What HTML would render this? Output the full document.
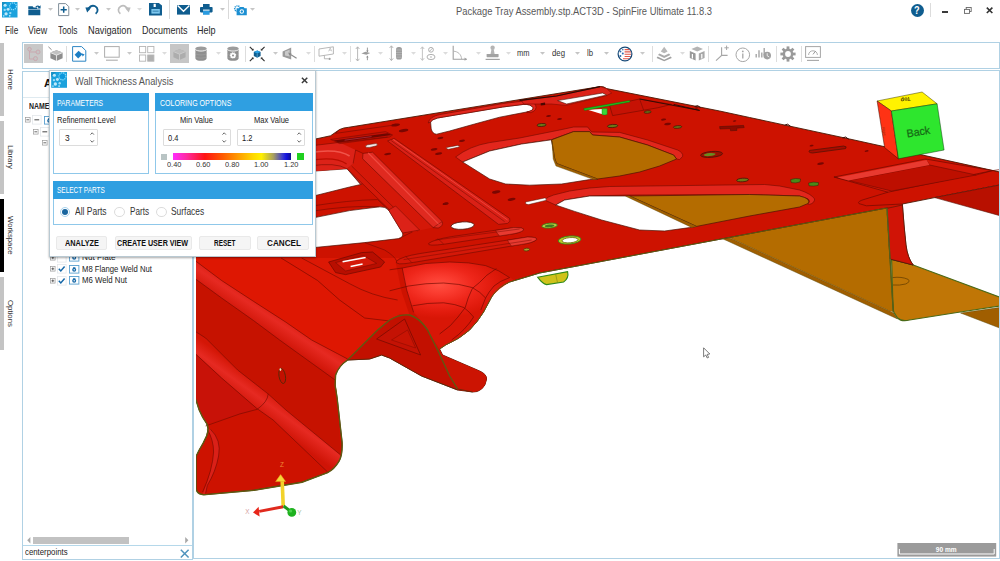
<!DOCTYPE html>
<html lang="en"><head><meta charset="utf-8"><title>Package Tray Assembly.stp.ACT3D - SpinFire Ultimate 11.8.3</title>
<style>
html,body{margin:0;padding:0;background:#fff;}
body{width:1000px;height:561px;overflow:hidden;position:relative;font-family:"Liberation Sans",sans-serif;}
.t{position:absolute;white-space:pre;transform-origin:0 50%;display:block;}
.a{position:absolute;}
svg{position:absolute;overflow:visible;}

#titlebar{position:absolute;left:0;top:0;width:1000px;height:22px;background:#fff;}
#menubar{position:absolute;left:0;top:22px;width:1000px;height:20px;background:#fff;}
#toolbar{position:absolute;left:22px;top:42px;width:978px;height:26.6px;border:1px solid #b0d1e4;box-sizing:border-box;background:#fff;}
#sidebar{position:absolute;left:0;top:42px;width:22px;height:519px;background:#fff;}
#tree{position:absolute;left:22px;top:71px;width:171px;height:489px;border:1px solid #b0d1e4;box-sizing:border-box;background:#fff;overflow:hidden;}
#viewport{position:absolute;left:193px;top:70px;width:807px;height:489.4px;border:1px solid #b0d1e4;border-width:1px 1px 1px 1px;box-sizing:border-box;background:#fff;overflow:hidden;}
#dialog{position:absolute;left:49px;top:70px;width:267px;height:187.4px;background:#fff;border:1px solid #b9c9d2;box-sizing:border-box;box-shadow:0 1px 2px rgba(0,0,0,.35);}
.grp{position:absolute;border:1px solid #8fc8ea;box-sizing:border-box;background:#fff;}
.grp .hd{position:absolute;left:-1px;top:-1px;right:-1px;height:18px;background:#2f9fe1;}
.spin{position:absolute;border:1px solid #dcdcdc;box-sizing:border-box;background:#fff;border-radius:1px;}
.btn{position:absolute;border:1px solid #e9e9e9;box-sizing:border-box;background:#f5f5f5;border-radius:2px;}
.rad{position:absolute;width:10px;height:10px;border-radius:50%;border:1px solid #dcdcdc;box-sizing:border-box;background:#fff;}
.sb{position:absolute;left:0;width:4px;background:#c4c4c4;}
.rot{position:absolute;white-space:pre;transform-origin:0 0;color:#333;}

</style></head><body>
<div id="viewport"><svg style="left:2.4px;top:0;overflow:hidden" width="802.6" height="488" viewBox="196.4 71 802.6 488"><defs>
<radialGradient id="dome" cx="440" cy="285" r="64" gradientUnits="userSpaceOnUse" gradientTransform="translate(440 285) scale(1 .52) translate(-440 -285)">
<stop offset="0" stop-color="#ff4e40"/><stop offset=".25" stop-color="#fa3c30"/><stop offset=".55" stop-color="#ee261a"/><stop offset=".85" stop-color="#e01a0c"/><stop offset="1" stop-color="#d81606"/></radialGradient>
<linearGradient id="sweep" x1="330" y1="300" x2="230" y2="420" gradientUnits="userSpaceOnUse">
<stop offset="0" stop-color="#d41408"/><stop offset=".35" stop-color="#e2201a"/><stop offset=".6" stop-color="#d01408"/><stop offset="1" stop-color="#c81000"/></linearGradient>
<linearGradient id="bead" x1="262" y1="296" x2="246" y2="320" gradientUnits="userSpaceOnUse"><stop offset="0" stop-color="#d81808"/><stop offset=".45" stop-color="#e62a22"/><stop offset="1" stop-color="#cf1406"/></linearGradient>
<linearGradient id="bead2" x1="262" y1="384" x2="246" y2="406" gradientUnits="userSpaceOnUse"><stop offset="0" stop-color="#d41606"/><stop offset=".45" stop-color="#e62a22"/><stop offset="1" stop-color="#cf1406"/></linearGradient>
</defs>
<path d="M552,139 L560,120 L700,110 L830,160 L887,208 L893,301 L894,312 L890,311 L735,240 L557,163.5 L555,158Z" fill="#b46c00"/>
<path d="M552,140 L555,158 L557,163.5 L598,179 L630,196 L700,226 L735,240 L890,311 L894,313 L898,319 L728,241 L697,227.5 L630,198.5 L598,181.5 L556,166 L553,159Z" fill="#a05e00" stroke="#5d4a08" stroke-width="0.5"/>
<path d="M961,313 L1000,307.5 L1000,328Z" fill="#a05e00" stroke="#5d4a08" stroke-width="0.5"/>
<path d="M892,259.4 L913.6,265 L1000,297 L1000,306 L957.5,312.5 L910,320 Q902,322 898,318 L893.5,311 Z" fill="#c07606" stroke="#4a6a18" stroke-width="1.2"/>
<path d="M893,277.6 Q902,276.4 908.6,279.4 Q911,282 906,284 Q900,285.6 893.4,285" fill="none" stroke="#5d3a00" stroke-width="0.7"/>
<path d="M887.4,208 L893,301 L894,312" fill="none" stroke="#4d5a10" stroke-width="1"/>
<path d="M190,150 L316,139 L331,135.75 L340,129.5 Q344,127.6 349,127.3 L600.5,86.6 Q604,86 607,88.6 L720,111 L750,117.5 L850,139 L1000,172 L1000,185 L935,197.6 L902.8,204 L904.6,227 L906.4,245 Q908,258 913.6,265 L892,259.4 L889,208.4 L887,208 L540,273 L510,282 Q498,287 492,297 L484,312 Q478,322 470,330 Q460,339 446,345 L440,349 L443,355 L480,371 Q487,374 487,379 Q486,386 482,389 Q478,392.5 473,392 L458,390 L422,376 L390,358 L382,355 L370,359 L348,360 Q339,366 336,375 L335.5,385 L337.5,398 L342.5,442.5 Q343,455 339.3,461.4 Q335,469 328,472.6 L302.4,482.2 L254.2,490.3 L206,494.6 Q198,495.4 196.4,489 L196.4,456.5 L199.6,450 Q204,443 207,436 Q210,429 207,423.4 Q203,418 199.6,410 L196.4,400 L194,396 L190,400 Z" fill="#cd1200" stroke="#4a1a06" stroke-width="0.9" stroke-linejoin="round"/>
<path d="M190,258 L281.5,258 L318,280.5 L340,300 L365,318 L390,321 L378,330 L362,346 L348,359 L312,340 L286,322 L254,301.4 L222,280.5 L196,261 L190,258 Z" fill="#de1702"/>
<path d="M281.5,258 L400,258 L396,262 L402,292 L410,315 L400,314 L390,321 L365,318 L340,300 L318,280.5 Z" fill="#dc1804"/>
<path d="M190,275 L196,279 L222,298 L254,320.6 L280,340 L335.5,380 L337.5,398 L341,455 L286.3,410 L268.6,394 L238,370 L206,338 L196,331.6 L190,327 Z" fill="#c61200"/>
<path d="M190,257 L196,261 L222,280.5 L254,301.4 L286,322 L312,340 L348,359 Q339,366 336,375 L335.5,380 L280,340 L254,320.6 L222,298 L196,279 L190,275 Z" fill="url(#bead)"/>
<path d="M190,327 L196,331.6 L206,338 L238,370 L268.6,394 L286.3,410 L341,455 Q341,459 339.3,461.4 Q335,469 328,472.6 L273.5,420 L257.4,408.6 L222,378 L196,354 L190,349 Z" fill="url(#bead2)"/>
<path d="M190,354 L196,354 L222,378 L257.4,408.6 L240,414 L207,424 L199.6,410 L196,400 L190,396 Z" fill="#c81208"/>
<path d="M210.9,429.3 Q222,440 219,456 Q216,472 207.7,485.4 L206,493.5 L203,494.5 Q213,470 214,452 Q214,440 207.7,429.3 Z" fill="#da2018"/>
<path d="M348,360 L362,346 L378,330 L390,320 Q400,314 410,315 Q420,318 428,330 L438,350 L450,376 L458,389 L422,376 L390,358 L382,355 L370,359 Z" fill="#c21000"/>
<path d="M405,319 L421,355 L377,339 Z" fill="#c41204" stroke="#6e0a00" stroke-width="0.7"/>
<path d="M408,330 L416,348 L392,340 Z" fill="#c81404" stroke="#6e0a00" stroke-width="0.4"/>
<path d="M440,349 L443,355 L480,371 Q487,374 487,379 Q486,386 482,389 Q478,392.5 473,392 L458,390 L450,376 L438,350 Z" fill="#cc1402"/>
<path d="M402.6,268 Q426,262 450,262 Q470,262 486,265.6 Q500,270 514,280 Q500,287 492,297 L484,312 Q478,322 470,330 Q460,339 446,345 L440,349 L428,330 Q420,318 414,312.4 Q406,290 402.6,268 Z" fill="url(#dome)"/>
<path d="M402.6,268 Q406,290 414,312.4" fill="none" stroke="#6e0a00" stroke-width="0.65"/>
<path d="M390,269.8 L402.6,268 Q426,262 450,262 Q470,262 486,265.6 Q500,270 510,277.6" fill="none" stroke="#6e0a00" stroke-width="0.65"/>
<path d="M390,290.8 L409,286 Q426,283 444,283 Q460,283.6 472.8,287.6 Q481,292 486,298" fill="none" stroke="#6e0a00" stroke-width="0.65"/>
<path d="M412.8,305.8 Q428,302.6 444,302.8 Q456,304 464.4,307.6 Q470,312 474,317" fill="none" stroke="#6e0a00" stroke-width="0.65"/>
<path d="M496.8,268.6 Q486,275 480,282.4 L472.8,288.4 Q468,298 465.6,307.6 L458.4,317" fill="none" stroke="#6e0a00" stroke-width="0.65"/>
<path d="M510,277.6 Q500,281 494.4,286 Q489,292 486,298 L481.2,310" fill="none" stroke="#6e0a00" stroke-width="0.65"/>
<path d="M458.4,317 Q452,326 440,334" fill="none" stroke="#6e0a00" stroke-width="0.65"/>
<path d="M474,317 Q466,330 452,340" fill="none" stroke="#6e0a00" stroke-width="0.65"/>
<path d="M196,261 L222,280.5 L254,301.4 L286,322 L312,340 L348,359" fill="none" stroke="#6e0a00" stroke-width="0.6"/>
<path d="M196,279 L222,298 L254,320.6 L280,340 L335.5,380" fill="none" stroke="#6e0a00" stroke-width="0.6"/>
<path d="M281.5,258 L318,280.5 L340,300 L365,318 L390,321" fill="none" stroke="#6e0a00" stroke-width="0.6"/>
<path d="M302,258 L350,283.7 Q372,296 398,300" fill="none" stroke="#6e0a00" stroke-width="0.6"/>
<path d="M196,331.6 L206,338 L238,370 L268.6,394 L286.3,410 L341,455" fill="none" stroke="#6e0a00" stroke-width="0.6"/>
<path d="M196,354 L222,378 L257.4,408.6 L273.5,420 L328,472" fill="none" stroke="#6e0a00" stroke-width="0.6"/>
<path d="M268.6,394 Q268,402 257.4,409.4 L240,414 L206,426" fill="none" stroke="#6e0a00" stroke-width="0.6"/>
<path d="M210.9,429.3 Q222,440 219,456 Q216,472 207.7,485.4 L206,493.5" fill="none" stroke="#6e0a00" stroke-width="0.6"/>
<path d="M207.7,429.3 Q214,440 214,452 Q213,470 203,492" fill="none" stroke="#6e0a00" stroke-width="0.6"/>
<ellipse cx="282.6" cy="376" rx="3.2" ry="7.6" transform="rotate(-10 282.6 376)" fill="#c21000" stroke="#4a2a06" stroke-width=".8"/><ellipse cx="280.8" cy="369.6" rx=".9" ry="1.3" fill="#f4e8c0"/>
<path d="M347.5,168.8 L353.5,163.5 L370,180 L361,184.5 Z" fill="#dc2018" stroke="#6e0a00" stroke-width="0.6"/>
<path d="M310,171.4 L347.5,168.8 L361,184.5 L350,187 L310,197 Z" fill="#fff" stroke="#4a1206" stroke-width="0.7"/>
<path d="M310,218.6 L350,210.6 L380,206.8 Q386,206.6 389,210 L403,233 Q404,237.6 399,238.6 L365,242.6 L310,248 Z" fill="#fff" stroke="#4a1206" stroke-width="0.7"/>
<path d="M431,122 Q432,119.6 438,118 L503,107 L524,104.4 Q531,104 533.4,107.6 Q534.4,110.6 527,112 L500,117.2 L475,124 L450,131 L437,134.2 Q433,134 431.6,129 Z" fill="#fff" stroke="#4a1206" stroke-width="0.7"/>
<path d="M428.6,123 Q430,116.6 440,114.6 L503,103.6 L524,101 Q533,100.6 536,105 Q538,110.6 531,112.6 L527,112 Q534.4,110.6 533.4,107.6 Q531,104 524,104.4 L503,107 L438,118 Q432,119.6 431,122 Z" fill="#e2261c" stroke="#6e0a00" stroke-width="0.6"/>
<path d="M456,157 Q470,146 490,142.6 L520,138 L560,130 L574,127 L588,127 L592,132 L620,132.4 L648,140 L678,150 Q684,153 683,156.4 L680,159.6 L677,159 L674,155 L648,145 L620,137 L593,135 L590,131.6 L574,131.6 L552,139.6 L522,144 L490,151 L463,162 Z" fill="#e2261c" stroke="#6e0a00" stroke-width="0.6"/>
<path d="M463,162 L490,151 L522,144 L552,139.8 L555,158 L557,163.5 L598,179 L590,179.6 L562,184 L530,185.2 L506,184 L490,179 Z" fill="#fff" stroke="#4a1206" stroke-width="0.7"/>
<path d="M552,139.8 L574,131.6 L590,131.6 L593,135 L620,137 L648,145 L674,155 L677,159 L660,166 L640,172 L620,176 L598,179 L557,163.5 L555,158 Z" fill="#b46c00" stroke="#4a1206" stroke-width="0.7"/>
<path d="M552.4,141 L555,158 L557,163.5 L598,179 L594,179.6 L556.4,166 L553.6,159 Z" fill="#a05e00" stroke="#5d4a08" stroke-width="0.4"/>
<path d="M545,200 Q548,196.6 554,195 L570,191 L590,188 L610,186.5 L765,184.5 L780,186 L800,190 Q812,194 815,199 Q815,203 810,204.4 L808,204 Q811.6,201 808,198.6 L800,196 L750,194.5 L627,195 L590,196 L565,200 L556,205 Z" fill="#e2261c" stroke="#6e0a00" stroke-width="0.6"/>
<path d="M556,205 L565,200 L590,196 L630,196 L697,226.4 L690,227.6 L665,231 L640,230 L602,220 L575,211.4 Z" fill="#fff" stroke="#4a1206" stroke-width="0.7"/>
<path d="M630,196 L750,194.5 L800,196 Q811.6,198.6 808.6,203.4 L800,207 L750,216 L697,226.4 Z" fill="#b46c00" stroke="#4a1206" stroke-width="0.7"/>
<path d="M630,196 L697,226.4 L692,227.4 L626,196.2 Z" fill="#a05e00" stroke="#5d4a08" stroke-width="0.4"/>
<path d="M522,100.6 L557,96 L600.5,86.6 L607,88.6 L612,93 L607,95.6 L566,105.4 L552,104 L524,104 Z" fill="#dc2218" stroke="#6e0a00" stroke-width="0.5"/>
<path d="M558,100.6 L603,93 L607,95 L567,104 Z" fill="#fff" stroke="#4a1206" stroke-width="0.6"/>
<path d="M520,100.4 L557,96 L600.5,86.6" fill="none" stroke="#2a0a04" stroke-width="1.2"/>
<path d="M610,105.4 L640,99 L672,104.4 L658,107.8 L613,115.6 Z" fill="#c61204" stroke="#6e0a00" stroke-width="0.6"/>
<path d="M640,99 L644,110" fill="none" stroke="#6e0a00" stroke-width="0.5"/>
<path d="M588,109.8 L603,109 L603.6,114.6 Z" fill="#fff"/>
<path d="M584,108.6 L630,100.4 L630.4,102 L585,110.4 Z" fill="#1fc21f" stroke="#0a6a0a" stroke-width="0.4"/>
<path d="M602.4,108.6 H607.6 V114.4 Q605,115.6 602.4,114.4 Z" fill="#3ad83a" stroke="#0a7a0a" stroke-width="0.4"/>
<path d="M935,197.6 L1000,185 L1000,215.6 Z" fill="#b81000" stroke="#5a1408" stroke-width="0.6"/>
<path d="M834.4,177 L926,159 L993,170.6 L888.4,192.2 Z" fill="#d41808" stroke="#6e0a00" stroke-width="0.7"/>
<path d="M849,180.5 L930,165 L976.6,175 L892,191 Z" fill="#bd0f00" stroke="#6e0a00" stroke-width="0.6"/>
<path d="M834.4,177 L849,180.5 M926,159 L930,165 M993,170.6 L976.6,175" fill="none" stroke="#6e0a00" stroke-width="0.6"/>
<path d="M838,177.4 L927,160 L930,165 L849,180.5 Z" fill="#e83a30"/>
<path d="M888.4,192.2 L866,199 Q857,201.4 859.4,203.6 L866.8,205.8 L902.8,204" fill="none" stroke="#6e0a00" stroke-width="0.7"/>
<path d="M993,170.6 L1000,169.6" fill="none" stroke="#6e0a00" stroke-width="0.7"/>
<path d="M887.4,208.4 L902.8,205 L904.6,227 L906.4,245 Q908,258 913.6,265 L890.4,259 Z" fill="#d01406" stroke="#4a1a06" stroke-width="0.6"/>
<path d="M887.4,208 L893,301 L894,312" fill="none" stroke="#55601a" stroke-width="1.3"/>
<path d="M887,208 L540,273 L510,282 Q498,287 492,297 L484,312 Q478,322 470,330 Q460,339 446,345 L440,349" fill="none" stroke="#5e5a12" stroke-width="1"/>
<path d="M458,389 L450,376 L438,350 L428,330 Q420,318 410,315 Q400,314 390,320 L378,330 L362,346 L348,360 Q339,366 336,375 L335.5,385 L337.5,398 L342.5,442.5 Q343,455 339.3,461.4 Q335,469 328,472.6 L302.4,482.2 L254.2,490.3 L206,494.6 Q198,495.4 196.4,489 L196.4,456.5 L199.6,450 Q204,443 207,436 Q210,429 207,423.4 Q203,418 199.6,410 L196.4,400 L194,396" fill="none" stroke="#5e5a12" stroke-width="1.4"/>
<path d="M458,389 L473,392 M348,360 L370,359 L382,355 L390,358 L422,376 L458,390" fill="none" stroke="#5a2a08" stroke-width="0.8"/>
<path d="M538,277.2 L568,271.6 Q569.6,278 564,282 L547,284.6 Q543,284 538,277.2 Z" fill="#cfc21a" stroke="#2f8a1a" stroke-width="1.1"/>
<path d="M556,274 L558,283" fill="none" stroke="#7a8a10" stroke-width="0.6"/>
<ellipse cx="463" cy="225.6" rx="11.6" ry="3.7" transform="rotate(-4 463 225.6)" fill="#fff" stroke="#4a1206" stroke-width=".8"/>
<ellipse cx="570" cy="240" rx="11.4" ry="4" transform="rotate(-5 570 240)" fill="#b8c828" stroke="#2f8a1a" stroke-width=".8"/>
<ellipse cx="570.4" cy="240.2" rx="8" ry="2.6" transform="rotate(-5 570.4 240.2)" fill="#fff" stroke="#6a6a10" stroke-width=".8"/>
<ellipse cx="550" cy="225.6" rx="7.8" ry="2.4" transform="rotate(-5 550 225.6)" fill="#b8c840" stroke="#2f8a1a" stroke-width=".8"/>
<ellipse cx="550" cy="225.8" rx="4.8" ry="1.3" transform="rotate(-5 550 225.8)" fill="#3f7a20"/>
<ellipse cx="527" cy="249.6" rx="3" ry="1.4" transform="rotate(-5 527 249.6)" fill="#a8a030" stroke="#5a3a08" stroke-width=".8"/>
<ellipse cx="446" cy="203.6" rx="3" ry="1.2" transform="rotate(-9 446 203.6)" fill="#8a0800"/>
<path d="M367,147.4 Q364.6,146 368,144.8 L376,143.6 Q379,144.2 377,145.8 L370,147.4 Z" fill="#f6eaea" stroke="#4a1206" stroke-width="0.5"/>
<path d="M447,147.6 L458,145.4 Q460.6,145.4 459.4,147 L449,149.2 Q446,149 447,147.6 Z" fill="#fff" stroke="#4a1206" stroke-width="0.5"/>
<path d="M526,202 L545,198 Q548,198.4 546,200.4 L529,204.6 Q525,204.4 526,202 Z" fill="#fff" stroke="#4a1206" stroke-width="0.5"/>
<ellipse cx="396" cy="125" rx="4.4" ry="1.4" transform="rotate(-9 396 125)" fill="#7a0600"/>
<ellipse cx="404" cy="130.6" rx="4.8" ry="1.5" transform="rotate(-9 404 130.6)" fill="#7a0600"/>
<ellipse cx="434.5" cy="149.4" rx="3.4" ry="1.2" transform="rotate(-9 434.5 149.4)" fill="#7a0600"/>
<ellipse cx="439" cy="153.6" rx="3.6" ry="1.2" transform="rotate(-9 439 153.6)" fill="#7a0600"/>
<ellipse cx="440.8" cy="138" rx="3" ry="1.1" transform="rotate(-9 440.8 138)" fill="#7a0600"/>
<ellipse cx="462.4" cy="140.8" rx="3" ry="1.1" transform="rotate(-9 462.4 140.8)" fill="#7a0600"/>
<ellipse cx="388" cy="154" rx="3.4" ry="1.1" transform="rotate(-9 388 154)" fill="#7a0600"/>
<ellipse cx="496.6" cy="192" rx="4.2" ry="1.5" transform="rotate(-9 496.6 192)" fill="#7a0600"/>
<ellipse cx="512" cy="199.3" rx="4" ry="1.4" transform="rotate(-9 512 199.3)" fill="#7a0600"/>
<ellipse cx="549" cy="116" rx="2.4" ry="1" transform="rotate(-9 549 116)" fill="#7a0600"/>
<ellipse cx="560" cy="119" rx="2.4" ry="1" transform="rotate(-9 560 119)" fill="#7a0600"/>
<ellipse cx="664" cy="119.6" rx="2.6" ry="1" transform="rotate(-9 664 119.6)" fill="#7a0600"/>
<ellipse cx="668" cy="124" rx="3.4" ry="1.2" transform="rotate(-9 668 124)" fill="#7a0600"/>
<ellipse cx="697" cy="108" rx="1.6" ry="0.7" transform="rotate(-9 697 108)" fill="#7a0600"/>
<ellipse cx="735" cy="121" rx="1.8" ry="0.7" transform="rotate(-9 735 121)" fill="#7a0600"/>
<ellipse cx="812" cy="145.6" rx="2" ry="0.8" transform="rotate(-9 812 145.6)" fill="#7a0600"/>
<ellipse cx="867" cy="151" rx="2" ry="0.8" transform="rotate(-9 867 151)" fill="#7a0600"/>
<ellipse cx="821" cy="163.6" rx="3.4" ry="1.2" transform="rotate(-9 821 163.6)" fill="#7a0600"/>
<ellipse cx="446" cy="203.8" rx="3" ry="1.2" transform="rotate(-9 446 203.8)" fill="#7a0600"/>
<ellipse cx="542" cy="125" rx="4.6" ry="1.5" transform="rotate(-4 542 125)" fill="#6a7a18" stroke="#4a1206" stroke-width=".8"/>
<ellipse cx="613" cy="126" rx="5.2" ry="1.6" transform="rotate(-4 613 126)" fill="#6a7a18" stroke="#4a1206" stroke-width=".8"/>
<ellipse cx="648" cy="112" rx="3.6" ry="1.2" transform="rotate(-4 648 112)" fill="#6a7a18" stroke="#4a1206" stroke-width=".8"/>
<ellipse cx="678" cy="127" rx="4.2" ry="1.3" transform="rotate(-4 678 127)" fill="#6a7a18" stroke="#4a1206" stroke-width=".8"/>
<ellipse cx="743" cy="180" rx="6" ry="1.8" transform="rotate(-4 743 180)" fill="#6a7a18" stroke="#4a1206" stroke-width=".8"/>
<ellipse cx="712" cy="154.4" rx="11" ry="2.9" transform="rotate(-5 712 154.4)" fill="#9a1000" stroke="#4a1206" stroke-width=".8"/>
<ellipse cx="710" cy="154.6" rx="6" ry="1.5" transform="rotate(-5 710 154.6)" fill="#6a8a20"/>
<path d="M720,126.6 L744,125.4 L744.6,127.6 L737,128.2 L737.4,130.4 L731,130.8 L730.6,128.6 L720.4,129 Z" fill="#8e0a00" stroke="#4a1206" stroke-width="0.5"/>
<path d="M810,150.4 L844,146 Q848,146.4 846,148.6 L813,153 Q808,152.6 810,150.4 Z" fill="#a80c00" stroke="#4a1206" stroke-width="0.7"/>
<path d="M541,103.2 L545.4,102.6 L545.6,105 L541.2,105.6 Z" fill="#4a0600"/>
<path d="M791,179.6 Q796,177.6 801,179 L800.4,182 Q796,183.6 791.6,182.6 Z M809,183 Q814,181.4 819,182.6 L818.6,185.4 Q814,186.6 809.4,185.8 Z" fill="#4a8a18" stroke="#3a1a06" stroke-width="0.5"/>
<path d="M695,106.6 L698,105.6 L701,107.6 M785,125.2 L788,124.2 L791,126.4 M843,138 L846,137 L849,139.2" fill="none" stroke="#3a0a04" stroke-width="1"/>
<path d="M429,243.4 Q434,239.6 452,236.6 L514,227.6 Q525,227.4 524,230 Q521,233 510,234.4 L446,244 Q427,246.6 429,243.4 Z" fill="#d41808" stroke="#6e0a00" stroke-width="0.6"/>
<path d="M496,230.4 L514,227.6 Q525,227.4 524,230 Q521,233 510,234.4 L500,236 Q497,233 496,230.4 Z" fill="#e83a30" stroke="#6e0a00" stroke-width="0.5"/>
<path d="M397,261 Q402,256.6 420,253.6 L528,237 Q538,237 537,239.6 Q533,243 522,244.4 L414,262.4 Q394,266 397,261 Z" fill="#d41808" stroke="#6e0a00" stroke-width="0.6"/>
<path d="M508,240.2 L528,237 Q538,237 537,239.6 Q533,243 522,244.4 L512,246 Q509,243 508,240.2 Z" fill="#e83a30" stroke="#6e0a00" stroke-width="0.5"/>
<path d="M436,240 L520,229 M404,259.6 L532,240" fill="none" stroke="#6e0a00" stroke-width="0.45"/>
<path d="M438,238.6 Q441,241 444,244 M406,256.4 Q409,259 412,262.4" fill="none" stroke="#6e0a00" stroke-width="0.5"/>
<path d="M356,150 L363.4,153.4 L433.6,227.4 L412.7,232 L347.5,168.8 L353.5,163.5 Z" fill="#d41808"/>
<path d="M363.4,153.4 L373,152.2 L442.6,221.6 Q444,226 438.6,228 L433.6,227.6 L363,158.8 Z" fill="#e02a20" stroke="#6e0a00" stroke-width="0.6"/>
<path d="M368.6,153 L439.6,224.6" fill="none" stroke="#f04a40" stroke-width="1.1"/>
<path d="M433.6,227.6 Q438,224.6 442.6,221.6" fill="none" stroke="#6e0a00" stroke-width="0.5"/>
<path d="M388,141 L394.6,138.4 L510,218.4 Q511.6,221.6 508,223.4 L499,224.4 Z" fill="#da2016" stroke="#6e0a00" stroke-width="0.6"/>
<path d="M391.6,140.6 L505,221.6" fill="none" stroke="#6e0a00" stroke-width="0.5"/>
<path d="M393.6,139.4 L508,220" fill="none" stroke="#ee463c" stroke-width="0.9"/>
<path d="M310,146 L340,142.4 L356,150 L353.5,163.5 L347.5,168.8 L310,171.4 Z" fill="#dc2218"/>
<path d="M310,152.6 Q338,148 350,156" fill="none" stroke="#f0544a" stroke-width="1.6"/>
<path d="M310,160.4 Q336,156 347,164" fill="none" stroke="#b80e00" stroke-width="1.2"/>
<path d="M331,139.4 L386,131.6 L393,135 L390,137 L340,143.6 Z" fill="#c01004" stroke="#6e0a00" stroke-width="0.5"/>
<path d="M334,140.6 L388,133.2 L392,135 L339,142.6 Z" fill="#6e0600"/>
<path d="M345,140.2 L372,136.6" fill="none" stroke="#a8283a" stroke-width="0.9"/>
<path d="M310,146 L340,142.4 L362,140 L388,137" fill="none" stroke="#6e0a00" stroke-width="0.55"/>
<path d="M340,129.5 L336,133.4 L392,125.4" fill="none" stroke="#6e0a00" stroke-width="0.55"/>
<path d="M310,166 Q336,162 347.5,168.8" fill="none" stroke="#6e0a00" stroke-width="0.55"/>
<path d="M353.5,163.5 L356,150 L363.4,153.4" fill="none" stroke="#6e0a00" stroke-width="0.55"/>
<path d="M347.5,168.8 L412.7,232" fill="none" stroke="#6e0a00" stroke-width="0.55"/>
<path d="M352,166 L418,231" fill="none" stroke="#6e0a00" stroke-width="0.55"/>
<path d="M310,206.4 Q350,200 378,199.6 L389,210" fill="none" stroke="#6e0a00" stroke-width="0.55"/>
<path d="M310,211.6 Q350,205 380,206.8" fill="none" stroke="#6e0a00" stroke-width="0.55"/>
<path d="M399,238.6 L412.7,232" fill="none" stroke="#6e0a00" stroke-width="0.55"/>
<path d="M403,233 L412,230" fill="none" stroke="#6e0a00" stroke-width="0.55"/>
<path d="M365,242.6 L385,250 Q395,256 397,261" fill="none" stroke="#6e0a00" stroke-width="0.55"/>
<path d="M316,139 L316,146" fill="none" stroke="#6e0a00" stroke-width="0.55"/>
<path d="M389,210 L396,206 L420,230 L403,233 Z" fill="#dc2218" stroke="#6e0a00" stroke-width="0.5"/>
<path d="M329,262 L362,252.6 L373,252 L385,262 L381,267 L346,274.6 L336,272.6 Z" fill="#b80e00" stroke="#6e0a00" stroke-width="0.7"/>
<path d="M336,262.6 L364,255.6 L377,263.4 L346,271 Z" fill="#d41808" stroke="#6e0a00" stroke-width="0.5"/>
<path d="M343,261.8 L366,257.4" fill="none" stroke="#fff" stroke-width="1.5"/>
<path d="M351,266.4 L363,264" fill="none" stroke="#fff" stroke-width="1.5"/>
<path d="M640,99 L700,110.4 L674,104.4" fill="none" stroke="#2a0a04" stroke-width="0.9"/>
<path d="M877.5,101 L922.5,92 L937.5,103.8 L891.8,111 Z" fill="#fff200" stroke="#3a3a00" stroke-width="0.5"/>
<path d="M877.5,101 L891.8,111 L898.8,158.8 L885,147.5 Z" fill="#ff3214" stroke="#3a0a00" stroke-width="0.5"/>
<path d="M891.8,111 L937.5,103.8 L944.5,150 L898.8,158.8 Z" fill="#2ee62e" stroke="#0a3a0a" stroke-width="0.5"/>
<text x="918.6" y="135.6" font-family="Liberation Sans, sans-serif" font-size="11" fill="#156a15" stroke="#156a15" stroke-width=".25" text-anchor="middle" transform="rotate(-9 918.6 131.6)" textLength="23.6" lengthAdjust="spacingAndGlyphs">Back</text>
<text x="906" y="101.6" font-family="Liberation Sans, sans-serif" font-size="5.6" font-weight="bold" fill="#4a4000" text-anchor="middle" transform="rotate(170 906 99.6)">Top</text>
<text x="885.4" y="133" font-family="Liberation Sans, sans-serif" font-size="3.6" fill="#8a2a10" text-anchor="middle" transform="rotate(82 885 131)">Right</text>
<path d="M282.6,481 L283.6,506" fill="none" stroke="#f2d22a" stroke-width="3.6"/>
<path d="M276,481.6 L281,474.6 L286,481.6 Z" fill="#f6d838" stroke="#e8a020" stroke-width="0.5"/>
<path d="M259.6,511.4 L283.6,506.8" fill="none" stroke="#e02a1e" stroke-width="3"/>
<path d="M253.4,512.6 L259,506.8 L260,516.4 Z" fill="#e8261a"/>
<path d="M284,506 L291,511.4" fill="none" stroke="#1e9a1e" stroke-width="3"/>
<circle cx="292.2" cy="512.4" r="4.4" fill="#1fb21f"/><circle cx="291" cy="511" r="1.6" fill="#4ad24a"/>
<text x="280.4" y="467.4" font-family="Liberation Sans, sans-serif" font-size="6.4" fill="#f08a3a">Z</text>
<text x="245.6" y="513.6" font-family="Liberation Sans, sans-serif" font-size="6.4" fill="#d4a0a0">X</text>
<text x="297.6" y="515" font-family="Liberation Sans, sans-serif" font-size="6.4" fill="#a0c0a0">Y</text>
<rect x="897.8" y="543" width="98.8" height="13.6" fill="#9b9b9b"/>
<path d="M899.8,549 V554 H994.6 V549" fill="none" stroke="#fff" stroke-width="1"/>
<text x="946.6" y="551.8" font-family="Liberation Sans, sans-serif" font-size="6.6" font-weight="bold" fill="#fff" text-anchor="middle">90 mm</text>
<path d="M704,347.8 V356.8 L706.2,355 L707.6,358 L709,357.4 L707.6,354.4 L710.2,354 Z" fill="#fff" stroke="#444" stroke-width="0.7"/></svg></div>
<div id="titlebar"><svg class="a" style="left:2px;top:2px" width="15.5" height="15.5" viewBox="0 0 16 16"><rect width="16" height="16" fill="#1ca2dc"/><path d="M0 0H5L0 5Z" fill="#1590c4"/>
<circle cx="11.4" cy="4.4" r="3.5" fill="#0c98dc" stroke="#86dcfb" stroke-width="1.3" stroke-dasharray="1.3 0.8"/>
<circle cx="3.2" cy="3.3" r="1.6" fill="#bfe9fb"/><circle cx="6.3" cy="7.6" r="1.5" fill="#bfe9fb"/>
<circle cx="2.8" cy="8.2" r="1.2" fill="#9bdcf8"/><circle cx="4.2" cy="12.2" r="1.7" fill="#bfe9fb"/>
<circle cx="8.6" cy="11.4" r="1.2" fill="#9bdcf8"/><circle cx="1.8" cy="14.2" r="0.9" fill="#9bdcf8"/><circle cx="8" cy="14.3" r="0.9" fill="#bfe9fb"/></svg><svg class="a" style="left:27.5px;top:4px" width="13" height="11.5" viewBox="0 0 13 11.5"><path d="M0.3 2.2H4.6L5.6 3.6H9.2V5H0.3Z M0.3 5.6H12.3V11.2H0.3Z" fill="#0f5d8f"/><path d="M7.5 2.6C9 1.2 10.6 1.2 11.4 2.2L12.6 1.2V4.6H9.2L10.4 3.4C9.6 2.6 8.6 2.8 8 3.4Z" fill="#0f5d8f"/></svg><svg class="a" style="left:47.5px;top:8.4px" width="5" height="3" viewBox="0 0 5 3"><path d="M0 0H5L2.5 2.8Z" fill="#c6c6c6"/></svg><svg class="a" style="left:57.5px;top:3px" width="11.5" height="13.2" viewBox="0 0 11.5 13.2"><path d="M0.6 0.6H7.6L10.8 3.6V12.6H0.6Z" fill="#fff" stroke="#7f8f9a" stroke-width="1"/><path d="M5.7 3.6V9.8M2.6 6.7H8.8" stroke="#0f5d8f" stroke-width="1.5"/></svg><svg class="a" style="left:74.5px;top:8.4px" width="5" height="3" viewBox="0 0 5 3"><path d="M0 0H5L2.5 2.8Z" fill="#c6c6c6"/></svg><svg class="a" style="left:85px;top:5px" width="14" height="9.5" viewBox="0 0 14 9.5"><path d="M3.4 5.2A4.6 4.4 0 1 1 10.6 8.8" fill="none" stroke="#0f5d8f" stroke-width="1.9"/><path d="M0.4 2.6L6.4 2.2L2.2 7.6Z" fill="#0f5d8f"/></svg><svg class="a" style="left:105.5px;top:8.4px" width="5" height="3" viewBox="0 0 5 3"><path d="M0 0H5L2.5 2.8Z" fill="#c6c6c6"/></svg><svg class="a" style="left:116.5px;top:5px" width="14" height="9.5" viewBox="0 0 14 9.5"><path d="M10.6 5.2A4.6 4.4 0 1 0 3.4 8.8" fill="none" stroke="#bdbdbd" stroke-width="1.7"/><path d="M13.6 2.6L7.6 2.2L11.8 7.6Z" fill="#bdbdbd"/></svg><svg class="a" style="left:136.5px;top:8.4px" width="5" height="3" viewBox="0 0 5 3"><path d="M0 0H5L2.5 2.8Z" fill="#dcdcdc"/></svg><svg class="a" style="left:149px;top:3.4px" width="13" height="12.4" viewBox="0 0 13 12.4"><path d="M0 0H9.8L13 2.6V12.4H0Z" fill="#0f5d8f"/><rect x="4.6" y="0.8" width="2.2" height="3.2" fill="#fff"/><rect x="2.4" y="6" width="8.4" height="4.6" fill="#7ec8ef"/><rect x="3.6" y="7.6" width="6" height="1.2" fill="#0f5d8f" opacity=".55"/></svg><div class="a" style="left:168.9px;top:0px;width:1px;height:19px;background:#d9d9d9"></div><svg class="a" style="left:177px;top:5px" width="13" height="9.6" viewBox="0 0 13 9.6"><rect width="13" height="9.6" fill="#0f5d8f"/><path d="M0.6 0.6L6.5 6.2L12.4 0.6" fill="none" stroke="#fff" stroke-width="1.4"/></svg><svg class="a" style="left:200px;top:4.2px" width="12.6" height="11" viewBox="0 0 12.6 11"><rect x="3" y="0" width="6.6" height="3" fill="#0f5d8f"/><rect x="0" y="3" width="12.6" height="5.4" rx="0.8" fill="#0f5d8f"/><rect x="3" y="6.4" width="6.6" height="4.4" fill="#2a9be0"/><rect x="3" y="5.6" width="6.6" height="1" fill="#fff"/></svg><svg class="a" style="left:219.5px;top:8.4px" width="5" height="3" viewBox="0 0 5 3"><path d="M0 0H5L2.5 2.8Z" fill="#c6c6c6"/></svg><div class="a" style="left:228.0px;top:0px;width:1px;height:19px;background:#d9d9d9"></div><svg class="a" style="left:234px;top:4.6px" width="13" height="10.4" viewBox="0 0 13 10.4"><circle cx="3.4" cy="3.6" r="2.7" fill="none" stroke="#1b8fd2" stroke-width="1.5" stroke-dasharray="1.1 0.8"/><path d="M2.6 3.2H5L6 2H9.6L10.6 3.2H12.8V10.2H2.6Z" fill="#1b8fd2"/><circle cx="7.8" cy="6.5" r="2.2" fill="#fff"/><circle cx="7.8" cy="6.5" r="1.2" fill="#1b8fd2"/></svg><svg class="a" style="left:250.0px;top:8.4px" width="5" height="3" viewBox="0 0 5 3"><path d="M0 0H5L2.5 2.8Z" fill="#c6c6c6"/></svg><span class="t" style="left:456.00px;top:5.71px;font-size:10.5px;line-height:10.5px;color:#585858;transform:scaleX(0.8929);">Package Tray Assembly.stp.ACT3D - SpinFire Ultimate 11.8.3</span><div class="a" style="left:910.6px;top:3.7px;width:13.4px;height:13.4px;border-radius:50%;background:#0f5d8f"></div><span class="t" style="left:914.40px;top:5.31px;font-size:10.5px;line-height:10.5px;color:#fff;font-weight:bold;transform:scaleX(0.8730);">?</span><div class="a" style="left:930.3px;top:2.5px;width:1px;height:14.5px;background:#dcdcdc"></div><div class="a" style="left:942px;top:11.2px;width:6.4px;height:1.8px;background:#3a3a3a"></div><svg class="a" style="left:963.5px;top:6.8px" width="8" height="7.2" viewBox="0 0 8 7.2"><rect x="2.2" y="0.5" width="5" height="4" fill="none" stroke="#666" stroke-width="0.9"/><rect x="0.5" y="2.4" width="5" height="4" fill="#fff" stroke="#666" stroke-width="0.9"/></svg><svg class="a" style="left:986px;top:6.8px" width="7.2" height="6.6" viewBox="0 0 7.2 6.6"><path d="M0.8 0.6L6.4 6M6.4 0.6L0.8 6" stroke="#333" stroke-width="1.6"/></svg></div>
<div id="menubar"><span class="t" style="left:4.75px;top:2.91px;font-size:10.5px;line-height:10.5px;color:#2a2a2a;transform:scaleX(0.7802);">File</span><span class="t" style="left:28.00px;top:2.91px;font-size:10.5px;line-height:10.5px;color:#2a2a2a;transform:scaleX(0.8507);">View</span><span class="t" style="left:57.75px;top:2.91px;font-size:10.5px;line-height:10.5px;color:#2a2a2a;transform:scaleX(0.7955);">Tools</span><span class="t" style="left:87.80px;top:2.91px;font-size:10.5px;line-height:10.5px;color:#2a2a2a;transform:scaleX(0.8788);">Navigation</span><span class="t" style="left:141.50px;top:2.91px;font-size:10.5px;line-height:10.5px;color:#2a2a2a;transform:scaleX(0.8568);">Documents</span><span class="t" style="left:197.00px;top:2.91px;font-size:10.5px;line-height:10.5px;color:#2a2a2a;transform:scaleX(0.8613);">Help</span></div>
<div id="toolbar"><div class="a" style="left:1px;top:1px;width:19px;height:19px;background:#c8c8c8"></div><svg class="a" style="left:2.5px;top:2.5px" width="16" height="16" viewBox="0 0 16 16"><path d="M3.5 3.2V13H8M3.5 6H11" fill="none" stroke="#c9a5ad" stroke-width="0.9"/><circle cx="3.5" cy="3.2" r="1.8" fill="#c4c4c4" stroke="#c9a5ad" stroke-width="0.9"/><circle cx="12" cy="6" r="2" fill="#c4c4c4" stroke="#c9a5ad" stroke-width="0.9"/><circle cx="9.5" cy="12.6" r="2" fill="#c4c4c4" stroke="#c9a5ad" stroke-width="0.9"/></svg><svg class="a" style="left:25.6px;top:2.6px" width="15.5" height="16" viewBox="0 0 15.5 16"><path d="M-0.6 0.8L2.6 3.8" stroke="#8e8e8e" stroke-width="1"/><path d="M7.5 4.2L13.6 6.6V12.2L7.5 15L1.4 12.2V6.6Z" fill="#8e8e8e"/><path d="M7.5 4.2L13.6 6.6L7.5 9.2L1.4 6.6Z" fill="#c2c2c2"/><path d="M7.5 9.2V15M1.4 6.6L7.5 9.2L13.6 6.6" stroke="#fff" stroke-width="0.7" fill="none"/></svg><div class="a" style="left:42.8px;top:2.6000000000000014px;width:1px;height:16.799999999999997px;background:#dddddd"></div><svg class="a" style="left:49px;top:3px" width="14.6" height="15.8" viewBox="0 0 14.6 15.8"><path d="M0.6 0.6H9.6L13.8 4.6V15.2H0.6Z" fill="#fff" stroke="#2a86c4" stroke-width="1"/><path d="M2.6 8.8L6.6 4.8L10.4 8.2L6.2 12.4Z" fill="#1c7ec4"/><path d="M9.6 7.2L12.6 8.6L10.6 10.4Z" fill="#1c7ec4"/></svg><svg class="a" style="left:70.8px;top:9.3px" width="5" height="3" viewBox="0 0 5 3"><path d="M0 0H5L2.5 2.8Z" fill="#c8c8c8"/></svg><svg class="a" style="left:81px;top:3.2px" width="16" height="15.4" viewBox="0 0 16 15.4"><rect x="0.6" y="0.6" width="14.6" height="10.6" fill="#fff" stroke="#adadad" stroke-width="1"/><path d="M2 14.2H13.8" stroke="#adadad" stroke-width="1.1"/></svg><svg class="a" style="left:104.30000000000001px;top:9.3px" width="5" height="3" viewBox="0 0 5 3"><path d="M0 0H5L2.5 2.8Z" fill="#c8c8c8"/></svg><svg class="a" style="left:116.4px;top:2.6px" width="15.6" height="16" viewBox="0 0 15.6 16"><rect x="0.5" y="0.5" width="6.2" height="6.2" fill="#fff" stroke="#b5b5b5" stroke-width=".9"/><rect x="8.7" y="0.5" width="6.2" height="6.2" fill="#fff" stroke="#b5b5b5" stroke-width=".9"/><rect x="0.5" y="9" width="6.2" height="6.2" fill="#fff" stroke="#b5b5b5" stroke-width=".9"/><rect x="8.7" y="9" width="6.2" height="6.2" fill="#b0b0b0" stroke="#b5b5b5" stroke-width=".9"/></svg><svg class="a" style="left:138.9px;top:9.3px" width="5" height="3" viewBox="0 0 5 3"><path d="M0 0H5L2.5 2.8Z" fill="#dcdcdc"/></svg><div class="a" style="left:147px;top:1px;width:19.4px;height:19px;background:#c6c6c6"></div><svg class="a" style="left:149.4px;top:2.4px" width="15" height="16" viewBox="0 0 15 16"><path d="M7.5 4.2L13.6 6.6V12.2L7.5 15L1.4 12.2V6.6Z" fill="#adadad"/><path d="M7.5 4.2L13.6 6.6L7.5 9.2L1.4 6.6Z" fill="#bcbcbc"/><path d="M7.5 9.2V15M1.4 6.6L7.5 9.2L13.6 6.6" stroke="#d2d2d2" stroke-width="0.7" fill="none"/></svg><svg class="a" style="left:171.6px;top:3.2px" width="12" height="15" viewBox="0 0 12 15"><path d="M0.4 2.6V12.2C0.4 13.8 3 14.8 6 14.8S11.6 13.8 11.6 12.2V2.6Z" fill="#8f8f8f"/><ellipse cx="6" cy="2.6" rx="5.6" ry="2.2" fill="#9c9c9c"/><path d="M0.4 3.4C1.6 5.6 10.4 5.6 11.6 3.4" fill="none" stroke="#fff" stroke-width="0.9"/><path d="M0.4 7.4C1.6 9.4 10.4 9.4 11.6 7.4M0.4 10.6C1.6 12.6 10.4 12.6 11.6 10.6" fill="none" stroke="#a8a8a8" stroke-width="0.5"/></svg><svg class="a" style="left:192.5px;top:9.3px" width="5" height="3" viewBox="0 0 5 3"><path d="M0 0H5L2.5 2.8Z" fill="#dcdcdc"/></svg><svg class="a" style="left:203.6px;top:3.2px" width="12" height="15" viewBox="0 0 12 15"><path d="M0.4 2.6V12.2C0.4 13.8 3 14.8 6 14.8S11.6 13.8 11.6 12.2V2.6Z" fill="#8f8f8f"/><ellipse cx="6" cy="2.6" rx="5.6" ry="2.2" fill="#9c9c9c"/><path d="M0.4 3.4C1.6 5.6 10.4 5.6 11.6 3.4" fill="none" stroke="#fff" stroke-width="0.9"/><path d="M0.4 7.4C1.6 9.4 10.4 9.4 11.6 7.4M0.4 10.6C1.6 12.6 10.4 12.6 11.6 10.6" fill="none" stroke="#a8a8a8" stroke-width="0.5"/><circle cx="6" cy="9.4" r="2.6" fill="#fff" stroke="#fff" stroke-width="1.2" stroke-dasharray="1 .8"/><circle cx="6" cy="9.4" r="1" fill="#8f8f8f"/></svg><div class="a" style="left:222.1px;top:2.6000000000000014px;width:1px;height:16.799999999999997px;background:#dddddd"></div><svg class="a" style="left:226.3px;top:2.6px" width="16.4" height="16" viewBox="0 0 16.4 16"><path d="M8.2 4.4L11.6 6V10L8.2 11.8L4.8 10V6Z" fill="#0f5d8f"/><path d="M8.2 4.4L11.6 6L8.2 7.6L4.8 6Z" fill="#2aa1e4"/><path d="M8.2 7.6V11.8" stroke="#7cc7f0" stroke-width=".6"/><path d="M0.8 0.8L4 4M15.6 0.8L12.4 4M0.8 15.2L4 12M15.6 15.2L12.4 12" stroke="#333" stroke-width="1.1"/><path d="M4.6 2.6V4.6H2.6ZM11.8 2.6V4.6H13.8ZM4.6 13.4V11.4H2.6ZM11.8 13.4V11.4H13.8Z" fill="#333"/></svg><svg class="a" style="left:249.5px;top:9.000000000000004px" width="5" height="3" viewBox="0 0 5 3"><path d="M0 0H5L2.5 2.8Z" fill="#c8c8c8"/></svg><svg class="a" style="left:259px;top:4px" width="15.4" height="13.4" viewBox="0 0 15.4 13.4"><path d="M0.6 4.4L9.2 0.6V12.6L0.6 9.4Z" fill="#9b9b9b"/><path d="M3 4.6L7.6 2.8V9.6L3 8.4Z" fill="#c9c9c9"/><path d="M7 6.6L14.6 11.2" stroke="#8b8b8b" stroke-width="1.2"/><path d="M6.2 5.6L9.6 6.4L7.4 8.6Z" fill="#8b8b8b"/></svg><svg class="a" style="left:282.5px;top:9.000000000000004px" width="5" height="3" viewBox="0 0 5 3"><path d="M0 0H5L2.5 2.8Z" fill="#dcdcdc"/></svg><div class="a" style="left:290.5px;top:2.6000000000000014px;width:1px;height:16.799999999999997px;background:#dddddd"></div><svg class="a" style="left:295px;top:3.4px" width="16.6" height="14.6" viewBox="0 0 16.6 14.6"><path d="M1 3L15.4 0.8V8L1 10.2Z" fill="#fff" stroke="#b0b0b0" stroke-width=".9"/><path d="M6.4 9.4V12.8H10.6" fill="none" stroke="#b0b0b0" stroke-width=".9"/><circle cx="11.6" cy="12.9" r="1.1" fill="#a0a0a0"/><path d="M10.6 5.4L12.2 1.8L13.8 5.4M11.2 4.2H13.2" fill="none" stroke="#b0b0b0" stroke-width=".6"/></svg><svg class="a" style="left:318.5px;top:9.000000000000004px" width="5" height="3" viewBox="0 0 5 3"><path d="M0 0H5L2.5 2.8Z" fill="#dcdcdc"/></svg><div class="a" style="left:326.9px;top:2.6000000000000014px;width:1px;height:16.799999999999997px;background:#dddddd"></div><svg class="a" style="left:332px;top:3px" width="16.4" height="15.8" viewBox="0 0 16.4 15.8"><path d="M2.6 1V14.8M0.8 3L2.6 0.8L4.4 3M0.8 12.8L2.6 15L4.4 12.8" fill="none" stroke="#b0b0b0" stroke-width=".9"/><path d="M6.4 7.4L10.4 5.8L15.2 7L11.4 8.8Z" fill="#9c9c9c"/><path d="M12.4 1.6V5.6M12.4 10V14.2" stroke="#8e8e8e" stroke-width=".9"/><path d="M11.2 4.6H13.6L12.4 6.4ZM11.2 11.4H13.6L12.4 9.6Z" fill="#8e8e8e"/></svg><svg class="a" style="left:355.0px;top:9.000000000000004px" width="5" height="3" viewBox="0 0 5 3"><path d="M0 0H5L2.5 2.8Z" fill="#dcdcdc"/></svg><svg class="a" style="left:365.6px;top:2px" width="14" height="16.4" viewBox="0 0 14 16.4"><path d="M2.4 1V15.4M0.6 3L2.4 0.8L4.2 3M0.6 13.4L2.4 15.6L4.2 13.4" fill="none" stroke="#b0b0b0" stroke-width=".9"/><rect x="7" y="2" width="6" height="12.6" rx="2.6" fill="#9d9d9d"/><path d="M7 5H13M7 7.4H13M7 9.8H13M7 12.2H13" stroke="#c4c4c4" stroke-width=".6"/></svg><svg class="a" style="left:388.3px;top:9.000000000000004px" width="5" height="3" viewBox="0 0 5 3"><path d="M0 0H5L2.5 2.8Z" fill="#dcdcdc"/></svg><svg class="a" style="left:397px;top:3.2px" width="16.4" height="15.2" viewBox="0 0 16.4 15.2"><path d="M2.4 1V14.2M0.6 3L2.4 0.8L4.2 3M0.6 12.2L2.4 14.4L4.2 12.2" fill="none" stroke="#bcbcbc" stroke-width=".9"/><circle cx="11" cy="3.8" r="2.4" fill="none" stroke="#a8a8a8" stroke-width=".9"/><path d="M9.4 5.4L12.6 2.2" stroke="#a8a8a8" stroke-width=".8"/><ellipse cx="11" cy="11" rx="4" ry="2.6" fill="none" stroke="#a8a8a8" stroke-width=".9"/><circle cx="11" cy="11" r=".8" fill="#a8a8a8"/></svg><svg class="a" style="left:419.5px;top:9.000000000000004px" width="5" height="3" viewBox="0 0 5 3"><path d="M0 0H5L2.5 2.8Z" fill="#dcdcdc"/></svg><svg class="a" style="left:428.2px;top:2px" width="16.4" height="16.4" viewBox="0 0 16.4 16.4"><path d="M2.2 0.8V14.2H15.8" fill="none" stroke="#a0a0a0" stroke-width="1.1"/><path d="M2.4 6.2C7 6.4 10.4 9.6 10.6 14" fill="none" stroke="#b0b0b0" stroke-width=".9"/><path d="M13.6 12.6L16 14.2L13.6 15.8Z" fill="#a0a0a0"/></svg><svg class="a" style="left:452.5px;top:9.000000000000004px" width="5" height="3" viewBox="0 0 5 3"><path d="M0 0H5L2.5 2.8Z" fill="#dcdcdc"/></svg><svg class="a" style="left:462px;top:2px" width="15.4" height="16.4" viewBox="0 0 15.4 16.4"><circle cx="7.6" cy="2.8" r="2.2" fill="#b4b4b4"/><path d="M6.4 4.6H8.8L9.6 9H5.6Z" fill="#b4b4b4"/><rect x="1.6" y="9" width="12" height="3.2" rx=".6" fill="#a2a2a2"/><path d="M0.6 14.4H14.8" stroke="#a2a2a2" stroke-width="1.2"/></svg><svg class="a" style="left:483.3px;top:9.000000000000004px" width="5" height="3" viewBox="0 0 5 3"><path d="M0 0H5L2.5 2.8Z" fill="#dcdcdc"/></svg><span class="t" style="left:494.00px;top:6.42px;font-size:8.6px;line-height:8.6px;color:#333;transform:scaleX(0.8724);">mm</span><svg class="a" style="left:517.0px;top:9.000000000000004px" width="5" height="3" viewBox="0 0 5 3"><path d="M0 0H5L2.5 2.8Z" fill="#c4c4c4"/></svg><span class="t" style="left:529.00px;top:6.42px;font-size:8.6px;line-height:8.6px;color:#333;transform:scaleX(0.9059);">deg</span><svg class="a" style="left:552.0px;top:9.000000000000004px" width="5" height="3" viewBox="0 0 5 3"><path d="M0 0H5L2.5 2.8Z" fill="#c4c4c4"/></svg><span class="t" style="left:564.00px;top:6.42px;font-size:8.6px;line-height:8.6px;color:#333;transform:scaleX(0.8962);">lb</span><svg class="a" style="left:580.8px;top:9.000000000000004px" width="5" height="3" viewBox="0 0 5 3"><path d="M0 0H5L2.5 2.8Z" fill="#c4c4c4"/></svg><svg class="a" style="left:593.6px;top:3px" width="16" height="16" viewBox="0 0 16 16"><defs><clipPath id="gc"><circle cx="8" cy="8" r="6.4"/></clipPath></defs><circle cx="8" cy="8" r="6.4" fill="#fff"/><g clip-path="url(#gc)"><path d="M7.6 3.6H15M7.6 5.9H15M7.6 8.2H15M7.6 10.5H15M6 12.8H15" stroke="#e0574a" stroke-width="1.1"/><circle cx="3.4" cy="5.4" r="1" fill="#2a6cb0"/><circle cx="5.8" cy="7.6" r="1" fill="#2a6cb0"/><circle cx="3.4" cy="10" r="1" fill="#2a6cb0"/><circle cx="5.8" cy="3.8" r=".8" fill="#2a6cb0"/></g><circle cx="8" cy="8" r="6.9" fill="none" stroke="#174a78" stroke-width="1.2"/></svg><svg class="a" style="left:617.0px;top:9.000000000000004px" width="5" height="3" viewBox="0 0 5 3"><path d="M0 0H5L2.5 2.8Z" fill="#c8c8c8"/></svg><div class="a" style="left:628.5px;top:2.6000000000000014px;width:1px;height:16.799999999999997px;background:#dddddd"></div><svg class="a" style="left:633.2px;top:3.2px" width="16.4" height="15.4" viewBox="0 0 16.4 15.4"><path d="M8.2 0.8L11.6 5.4L8.2 7.2L4.8 5.4Z" fill="#b8b8b8"/><path d="M3.4 7.4L8.2 9.8L13 7.4L14.4 9L8.2 12L2 9Z" fill="#ababab"/><path d="M1.6 10.6L8.2 13.8L14.8 10.6L15.8 12L8.2 15.2L0.6 12Z" fill="#a0a0a0"/></svg><svg class="a" style="left:656.5px;top:9.000000000000004px" width="5" height="3" viewBox="0 0 5 3"><path d="M0 0H5L2.5 2.8Z" fill="#dcdcdc"/></svg><svg class="a" style="left:665.8px;top:3.2px" width="16.4" height="15.4" viewBox="0 0 16.4 15.4"><path d="M8.2 0.6L14 3L8.2 5.6L2.4 3Z" fill="#b4b4b4"/><path d="M0.8 5L6.6 7.6V14.6L0.8 12Z" fill="#9a9a9a"/><path d="M15.6 5L9.8 7.6V14.6L15.6 12Z" fill="#a8a8a8"/><path d="M3.4 8V12.4M12.8 8V12.4" stroke="#fff" stroke-width="1.2"/></svg><div class="a" style="left:685.3px;top:2.6000000000000014px;width:1px;height:16.799999999999997px;background:#dddddd"></div><svg class="a" style="left:692px;top:2px" width="14.4" height="16.4" viewBox="0 0 14.4 16.4"><path d="M6.6 2.2V10.4L1 15.6M6.6 10.4H12.6" fill="none" stroke="#a6a6a6" stroke-width="1.1"/><path d="M11.6 0.6V5M9.4 2.8H13.8" stroke="#a6a6a6" stroke-width="1"/></svg><svg class="a" style="left:711.6px;top:3.6px" width="15.6" height="15.6" viewBox="0 0 15.6 15.6"><circle cx="7.8" cy="7.8" r="6.8" fill="none" stroke="#a6a6a6" stroke-width="1"/><path d="M7.8 6.6V11.6" stroke="#a6a6a6" stroke-width="1.3"/><circle cx="7.8" cy="4.4" r=".9" fill="#a6a6a6"/></svg><svg class="a" style="left:732.4px;top:4.4px" width="17" height="13" viewBox="0 0 17 13"><path d="M1.2 7V10.6M4 3.2V10.6M6.8 5.4V10.6M9.2 1V8" stroke="#a6a6a6" stroke-width="1.4"/><circle cx="12.2" cy="8.6" r="3.8" fill="#a0a0a0"/><path d="M12.2 6.2V8.8L14.2 10" fill="none" stroke="#fff" stroke-width=".8"/></svg><div class="a" style="left:752.8px;top:2.6000000000000014px;width:1px;height:16.799999999999997px;background:#dddddd"></div><svg class="a" style="left:757.4px;top:3px" width="16" height="16" viewBox="0 0 16 16"><g transform="translate(8 8)" fill="#9a9a9a"><rect x="-1.4" y="-7.6" width="2.8" height="3.2" transform="rotate(0)" /><rect x="-1.4" y="-7.6" width="2.8" height="3.2" transform="rotate(45)" /><rect x="-1.4" y="-7.6" width="2.8" height="3.2" transform="rotate(90)" /><rect x="-1.4" y="-7.6" width="2.8" height="3.2" transform="rotate(135)" /><rect x="-1.4" y="-7.6" width="2.8" height="3.2" transform="rotate(180)" /><rect x="-1.4" y="-7.6" width="2.8" height="3.2" transform="rotate(225)" /><rect x="-1.4" y="-7.6" width="2.8" height="3.2" transform="rotate(270)" /><rect x="-1.4" y="-7.6" width="2.8" height="3.2" transform="rotate(315)" /><circle r="5.4"/><circle r="2.9" fill="#fff"/></g></svg><div class="a" style="left:777.8px;top:2.6000000000000014px;width:1px;height:16.799999999999997px;background:#dddddd"></div><svg class="a" style="left:782.4px;top:3.2px" width="16" height="15.4" viewBox="0 0 16 15.4"><rect x="0.6" y="0.6" width="14.8" height="10.8" fill="#fff" stroke="#a6a6a6" stroke-width="1"/><path d="M3.6 9C3.6 3.4 12.4 3.4 12.4 9" fill="none" stroke="#a6a6a6" stroke-width=".9"/><path d="M8 8.4L10.6 5" stroke="#8d8d8d" stroke-width=".9"/><path d="M2 14.4H14" stroke="#a6a6a6" stroke-width="1.1"/></svg></div>
<div id="sidebar"><div class="sb" style="top:0.6px;height:73.4px;background:#c4c4c4"></div><div class="sb" style="top:78.6px;height:73.2px;background:#c4c4c4"></div><div class="sb" style="top:156.6px;height:73.6px;background:#000"></div><div class="sb" style="top:234.5px;height:73.7px;background:#c4c4c4"></div><span class="rot" style="left:14.37px;top:27.10px;font-size:8px;line-height:8px;transform:rotate(90deg) scaleX(0.9841)">Home</span><span class="rot" style="left:14.37px;top:103.40px;font-size:8px;line-height:8px;transform:rotate(90deg) scaleX(0.9814)">Library</span><span class="rot" style="left:14.37px;top:174.30px;font-size:8px;line-height:8px;transform:rotate(90deg) scaleX(0.9682)">Workspace</span><span class="rot" style="left:14.37px;top:258.10px;font-size:8px;line-height:8px;transform:rotate(90deg) scaleX(0.9793)">Options</span></div>
<div id="tree"><span class="t" style="left:21.00px;top:6.29px;font-size:11px;line-height:11px;color:#111;font-weight:bold;">Assembly</span><div class="a" style="left:0;top:24.5px;width:170px;height:1px;background:#dfeaf0"></div><span class="t" style="left:5.50px;top:29.89px;font-size:8.4px;line-height:8.4px;color:#222;font-weight:bold;transform:scaleX(0.8289);">NAME</span><svg class="a" style="left:2px;top:45.2px" width="5.6" height="5.6" viewBox="0 0 5.6 5.6"><rect x=".5" y=".5" width="4.6" height="4.6" fill="#fff" stroke="#9a9a9a" stroke-width=".7"/><path d="M1.4 2.8H4.2" stroke="#444" stroke-width=".8"/></svg><svg class="a" style="left:9.399999999999999px;top:43.2px" width="9.6" height="9.6" viewBox="0 0 9.6 9.6"><rect x=".5" y=".5" width="8.6" height="8.6" fill="#fff" stroke="#e3e7ea" stroke-width=".8"/><path d="M2.4 4.8H7.2" stroke="#555" stroke-width="1.1"/></svg><svg class="a" style="left:21.4px;top:43.8px" width="10.4" height="8.6" viewBox="0 0 10.4 8.6"><rect x=".5" y=".5" width="9.4" height="7.6" fill="#fff" stroke="#5aa0d0" stroke-width=".9"/><circle cx="5.2" cy="4.8" r="2" fill="#1668a8"/><circle cx="5.2" cy="4.8" r=".7" fill="#fff"/><path d="M4 2.6H6.4" stroke="#1668a8" stroke-width=".8"/></svg><span class="t" style="left:34.40px;top:43.72px;font-size:8.6px;line-height:8.6px;color:#222;">Package Tray Assembly</span><svg class="a" style="left:10px;top:56.69999999999999px" width="5.6" height="5.6" viewBox="0 0 5.6 5.6"><rect x=".5" y=".5" width="4.6" height="4.6" fill="#fff" stroke="#9a9a9a" stroke-width=".7"/><path d="M1.4 2.8H4.2" stroke="#444" stroke-width=".8"/></svg><svg class="a" style="left:17.4px;top:54.7px" width="9.6" height="9.6" viewBox="0 0 9.6 9.6"><rect x=".5" y=".5" width="8.6" height="8.6" fill="#fff" stroke="#e3e7ea" stroke-width=".8"/><path d="M2.4 4.8H7.2" stroke="#555" stroke-width="1.1"/></svg><svg class="a" style="left:29.4px;top:55.3px" width="10.4" height="8.6" viewBox="0 0 10.4 8.6"><rect x=".5" y=".5" width="9.4" height="7.6" fill="#fff" stroke="#5aa0d0" stroke-width=".9"/><circle cx="5.2" cy="4.8" r="2" fill="#1668a8"/><circle cx="5.2" cy="4.8" r=".7" fill="#fff"/><path d="M4 2.6H6.4" stroke="#1668a8" stroke-width=".8"/></svg><span class="t" style="left:42.40px;top:55.22px;font-size:8.6px;line-height:8.6px;color:#222;">Package Tray</span><svg class="a" style="left:19px;top:68.19999999999999px" width="5.6" height="5.6" viewBox="0 0 5.6 5.6"><rect x=".5" y=".5" width="4.6" height="4.6" fill="#fff" stroke="#9a9a9a" stroke-width=".7"/><path d="M1.4 2.8H4.2" stroke="#444" stroke-width=".8"/></svg><svg class="a" style="left:26.4px;top:66.19999999999999px" width="9.6" height="9.6" viewBox="0 0 9.6 9.6"><rect x=".5" y=".5" width="8.6" height="8.6" fill="#fff" stroke="#e3e7ea" stroke-width=".8"/><path d="M1.8 4.8L3.8 6.9L7.6 2.4" fill="none" stroke="#1668a8" stroke-width="1.5"/></svg><svg class="a" style="left:38.4px;top:66.80000000000001px" width="10.4" height="8.6" viewBox="0 0 10.4 8.6"><rect x=".5" y=".5" width="9.4" height="7.6" fill="#fff" stroke="#5aa0d0" stroke-width=".9"/><circle cx="5.2" cy="4.8" r="2" fill="#1668a8"/><circle cx="5.2" cy="4.8" r=".7" fill="#fff"/><path d="M4 2.6H6.4" stroke="#1668a8" stroke-width=".8"/></svg><span class="t" style="left:51.40px;top:66.72px;font-size:8.6px;line-height:8.6px;color:#222;">Tray Panel</span><svg class="a" style="left:27px;top:182.59999999999997px" width="5.6" height="5.6" viewBox="0 0 5.6 5.6"><rect x=".5" y=".5" width="4.6" height="4.6" fill="#fff" stroke="#9a9a9a" stroke-width=".7"/><path d="M1.4 2.8H4.2" stroke="#444" stroke-width=".8"/><path d="M2.8 1.4V4.2" stroke="#444" stroke-width=".8"/></svg><svg class="a" style="left:34.4px;top:180.59999999999997px" width="9.6" height="9.6" viewBox="0 0 9.6 9.6"><rect x=".5" y=".5" width="8.6" height="8.6" fill="#fff" stroke="#e3e7ea" stroke-width=".8"/></svg><svg class="a" style="left:46.400000000000006px;top:181.2px" width="10.4" height="8.6" viewBox="0 0 10.4 8.6"><rect x=".5" y=".5" width="9.4" height="7.6" fill="#fff" stroke="#5aa0d0" stroke-width=".9"/><circle cx="5.2" cy="4.8" r="2" fill="#1668a8"/><circle cx="5.2" cy="4.8" r=".7" fill="#fff"/><path d="M4 2.6H6.4" stroke="#1668a8" stroke-width=".8"/></svg><span class="t" style="left:59.40px;top:181.12px;font-size:8.6px;line-height:8.6px;color:#222;transform:scaleX(0.9470);">Nut Plate</span><svg class="a" style="left:27px;top:194.09999999999997px" width="5.6" height="5.6" viewBox="0 0 5.6 5.6"><rect x=".5" y=".5" width="4.6" height="4.6" fill="#fff" stroke="#9a9a9a" stroke-width=".7"/><path d="M1.4 2.8H4.2" stroke="#444" stroke-width=".8"/><path d="M2.8 1.4V4.2" stroke="#444" stroke-width=".8"/></svg><svg class="a" style="left:34.4px;top:192.09999999999997px" width="9.6" height="9.6" viewBox="0 0 9.6 9.6"><rect x=".5" y=".5" width="8.6" height="8.6" fill="#fff" stroke="#e3e7ea" stroke-width=".8"/><path d="M1.8 4.8L3.8 6.9L7.6 2.4" fill="none" stroke="#1668a8" stroke-width="1.5"/></svg><svg class="a" style="left:46.400000000000006px;top:192.7px" width="10.4" height="8.6" viewBox="0 0 10.4 8.6"><rect x=".5" y=".5" width="9.4" height="7.6" fill="#fff" stroke="#5aa0d0" stroke-width=".9"/><circle cx="5.2" cy="4.8" r="2" fill="#1668a8"/><circle cx="5.2" cy="4.8" r=".7" fill="#fff"/><path d="M4 2.6H6.4" stroke="#1668a8" stroke-width=".8"/></svg><span class="t" style="left:59.40px;top:192.62px;font-size:8.6px;line-height:8.6px;color:#222;transform:scaleX(0.8948);">M8 Flange Weld Nut</span><svg class="a" style="left:27px;top:205.59999999999997px" width="5.6" height="5.6" viewBox="0 0 5.6 5.6"><rect x=".5" y=".5" width="4.6" height="4.6" fill="#fff" stroke="#9a9a9a" stroke-width=".7"/><path d="M1.4 2.8H4.2" stroke="#444" stroke-width=".8"/><path d="M2.8 1.4V4.2" stroke="#444" stroke-width=".8"/></svg><svg class="a" style="left:34.4px;top:203.59999999999997px" width="9.6" height="9.6" viewBox="0 0 9.6 9.6"><rect x=".5" y=".5" width="8.6" height="8.6" fill="#fff" stroke="#e3e7ea" stroke-width=".8"/><path d="M1.8 4.8L3.8 6.9L7.6 2.4" fill="none" stroke="#1668a8" stroke-width="1.5"/></svg><svg class="a" style="left:46.400000000000006px;top:204.2px" width="10.4" height="8.6" viewBox="0 0 10.4 8.6"><rect x=".5" y=".5" width="9.4" height="7.6" fill="#fff" stroke="#5aa0d0" stroke-width=".9"/><circle cx="5.2" cy="4.8" r="2" fill="#1668a8"/><circle cx="5.2" cy="4.8" r=".7" fill="#fff"/><path d="M4 2.6H6.4" stroke="#1668a8" stroke-width=".8"/></svg><span class="t" style="left:59.40px;top:204.12px;font-size:8.6px;line-height:8.6px;color:#222;transform:scaleX(0.9082);">M6 Weld Nut</span><div class="a" style="left:10.399999999999999px;top:464.6px;width:95.2px;height:7.8px;background:#c2c2c2"></div><svg class="a" style="left:3.6000000000000014px;top:465.4px" width="3.6" height="6.4" viewBox="0 0 3.6 6.4"><path d="M3.4 0V6.4L0.2 3.2Z" fill="#a8a8a8"/></svg><svg class="a" style="left:161.6px;top:465.4px" width="3.6" height="6.4" viewBox="0 0 3.6 6.4"><path d="M0.2 0V6.4L3.4 3.2Z" fill="#a8a8a8"/></svg><div class="a" style="left:0;top:473.20000000000005px;width:170px;height:1px;background:#b5d8ea"></div><span class="t" style="left:2.00px;top:475.92px;font-size:8.6px;line-height:8.6px;color:#222;transform:scaleX(0.9093);">centerpoints</span><svg class="a" style="left:157px;top:477px" width="9.4" height="9.4" viewBox="0 0 9.4 9.4"><path d="M0.8 0.8L8.6 8.6M8.6 0.8L0.8 8.6" stroke="#4f93bd" stroke-width="1.5"/></svg></div>
<div id="dialog"><svg class="a" style="left:0.6000000000000014px;top:1px" width="16.2" height="15.8" viewBox="0 0 16 16"><rect width="16" height="16" fill="#1ca2dc"/><path d="M0 0H5L0 5Z" fill="#1590c4"/>
<circle cx="11.4" cy="4.4" r="3.5" fill="#0c98dc" stroke="#86dcfb" stroke-width="1.3" stroke-dasharray="1.3 0.8"/>
<circle cx="3.2" cy="3.3" r="1.6" fill="#bfe9fb"/><circle cx="6.3" cy="7.6" r="1.5" fill="#bfe9fb"/>
<circle cx="2.8" cy="8.2" r="1.2" fill="#9bdcf8"/><circle cx="4.2" cy="12.2" r="1.7" fill="#bfe9fb"/>
<circle cx="8.6" cy="11.4" r="1.2" fill="#9bdcf8"/><circle cx="1.8" cy="14.2" r="0.9" fill="#9bdcf8"/><circle cx="8" cy="14.3" r="0.9" fill="#bfe9fb"/></svg><span class="t" style="left:24.60px;top:4.73px;font-size:10.6px;line-height:10.6px;color:#555;transform:scaleX(0.8745);">Wall Thickness Analysis</span><svg class="a" style="left:251.39999999999998px;top:6.200000000000003px" width="7.2" height="6.8" viewBox="0 0 7.2 6.8"><path d="M0.9 0.8L6.3 6M6.3 0.8L0.9 6" stroke="#3a3a3a" stroke-width="1.5"/></svg><div class="grp" style="left:2.6000000000000014px;top:22.400000000000006px;width:96.0px;height:80.6px"><div class="hd"></div><span class="t" style="left:3.20px;top:4.49px;font-size:8.4px;line-height:8.4px;color:#fff;transform:scaleX(0.8069);">PARAMETERS</span><span class="t" style="left:3.00px;top:22.00px;font-size:8.5px;line-height:8.5px;color:#222;transform:scaleX(0.8859);">Refinement Level</span><div class="spin" style="left:5.799999999999997px;top:34.599999999999994px;width:39px;height:17px"></div><span class="t" style="left:11.40px;top:39.79px;font-size:8.4px;line-height:8.4px;color:#222;">3</span><svg class="a" style="left:36.800000000000004px;top:38.0px" width="4.4" height="3" viewBox="0 0 4.4 3"><path d="M0.5 2.6L2.2 0.8L3.9 2.6" fill="none" stroke="#555" stroke-width=".9"/></svg><svg class="a" style="left:36.800000000000004px;top:45.400000000000006px" width="4.4" height="3" viewBox="0 0 4.4 3"><path d="M0.5 0.4L2.2 2.2L3.9 0.4" fill="none" stroke="#555" stroke-width=".9"/></svg></div><div class="grp" style="left:105.4px;top:22.400000000000006px;width:157.20000000000002px;height:80.6px"><div class="hd"></div><span class="t" style="left:3.20px;top:4.49px;font-size:8.4px;line-height:8.4px;color:#fff;transform:scaleX(0.8429);">COLORING OPTIONS</span><span class="t" style="left:23.60px;top:21.80px;font-size:8.5px;line-height:8.5px;color:#222;transform:scaleX(0.8879);">Min Value</span><span class="t" style="left:97.60px;top:21.80px;font-size:8.5px;line-height:8.5px;color:#222;transform:scaleX(0.8854);">Max Value</span><div class="spin" style="left:6.199999999999989px;top:34.599999999999994px;width:68px;height:17px"></div><span class="t" style="left:11.20px;top:39.79px;font-size:8.4px;line-height:8.4px;color:#222;transform:scaleX(0.8906);">0.4</span><svg class="a" style="left:65.79999999999998px;top:38.0px" width="4.4" height="3" viewBox="0 0 4.4 3"><path d="M0.5 2.6L2.2 0.8L3.9 2.6" fill="none" stroke="#555" stroke-width=".9"/></svg><svg class="a" style="left:65.79999999999998px;top:45.400000000000006px" width="4.4" height="3" viewBox="0 0 4.4 3"><path d="M0.5 0.4L2.2 2.2L3.9 0.4" fill="none" stroke="#555" stroke-width=".9"/></svg><div class="spin" style="left:81.0px;top:34.599999999999994px;width:68px;height:17px"></div><span class="t" style="left:86.00px;top:39.79px;font-size:8.4px;line-height:8.4px;color:#222;transform:scaleX(0.8906);">1.2</span><svg class="a" style="left:140.6px;top:38.0px" width="4.4" height="3" viewBox="0 0 4.4 3"><path d="M0.5 2.6L2.2 0.8L3.9 2.6" fill="none" stroke="#555" stroke-width=".9"/></svg><svg class="a" style="left:140.6px;top:45.400000000000006px" width="4.4" height="3" viewBox="0 0 4.4 3"><path d="M0.5 0.4L2.2 2.2L3.9 0.4" fill="none" stroke="#555" stroke-width=".9"/></svg><div class="a" style="left:5.0px;top:59.400000000000006px;width:5.8px;height:5.8px;background:#b9c4c4"></div><div class="a" style="left:16.599999999999994px;top:58.599999999999994px;width:118px;height:6.6px;background:linear-gradient(90deg,#ff2cff 0%,#ff2a9c 12%,#ff1414 27%,#ff5a00 42%,#ff9a00 55%,#ffd800 68%,#fff000 75%,#a8a060 85%,#3a3ad0 93%,#1414e0 96%,#10108c 100%)"></div><div class="a" style="left:140.99999999999997px;top:59.0px;width:6.2px;height:6.2px;background:#1fd01f"></div><span class="t" style="left:10.60px;top:67.03px;font-size:8px;line-height:8px;color:#333;transform:scaleX(0.9248);">0.40</span><span class="t" style="left:39.60px;top:67.03px;font-size:8px;line-height:8px;color:#333;transform:scaleX(0.9248);">0.60</span><span class="t" style="left:68.60px;top:67.03px;font-size:8px;line-height:8px;color:#333;transform:scaleX(0.9248);">0.80</span><span class="t" style="left:97.60px;top:67.03px;font-size:8px;line-height:8px;color:#333;transform:scaleX(0.9248);">1.00</span><span class="t" style="left:127.60px;top:67.03px;font-size:8px;line-height:8px;color:#333;transform:scaleX(0.9248);">1.20</span></div><div class="grp" style="left:2.6000000000000014px;top:110px;width:260.0px;height:43.80000000000001px"><div class="hd"></div><span class="t" style="left:3.20px;top:4.49px;font-size:8.4px;line-height:8.4px;color:#fff;transform:scaleX(0.7731);">SELECT PARTS</span><div class="rad" style="left:6.199999999999996px;top:24.80000000000001px;width:10.4px;height:10.4px;border-color:#a8d3ee"></div><div class="a" style="left:8.399999999999999px;top:27px;width:6px;height:6px;border-radius:50%;background:#17659f"></div><span class="t" style="left:21.80px;top:25.40px;font-size:10.4px;line-height:10.4px;color:#333;transform:scaleX(0.8161);">All Parts</span><div class="rad" style="left:60.6px;top:24.80000000000001px;width:10.4px;height:10.4px"></div><span class="t" style="left:76.40px;top:25.40px;font-size:10.4px;line-height:10.4px;color:#333;transform:scaleX(0.7827);">Parts</span><div class="rad" style="left:102.60000000000002px;top:24.80000000000001px;width:10.4px;height:10.4px"></div><span class="t" style="left:117.80px;top:25.40px;font-size:10.4px;line-height:10.4px;color:#333;transform:scaleX(0.8089);">Surfaces</span></div><div class="btn" style="left:6px;top:164.6px;width:51px;height:14.6px"></div><span class="t" style="left:14.60px;top:168.56px;font-size:8.2px;line-height:8.2px;color:#111;font-weight:bold;transform:scaleX(0.8954);">ANALYZE</span><div class="btn" style="left:64.6px;top:164.6px;width:77.0px;height:14.6px"></div><span class="t" style="left:67.40px;top:168.56px;font-size:8.2px;line-height:8.2px;color:#111;font-weight:bold;transform:scaleX(0.8747);">CREATE USER VIEW</span><div class="btn" style="left:149px;top:164.6px;width:51.599999999999994px;height:14.6px"></div><span class="t" style="left:164.00px;top:168.56px;font-size:8.2px;line-height:8.2px;color:#111;font-weight:bold;transform:scaleX(0.7828);">RESET</span><div class="btn" style="left:207px;top:164.6px;width:51.60000000000002px;height:14.6px"></div><span class="t" style="left:216.60px;top:168.01px;font-size:9.2px;line-height:9.2px;color:#111;font-weight:bold;transform:scaleX(0.8870);">CANCEL</span></div>
</body></html>
